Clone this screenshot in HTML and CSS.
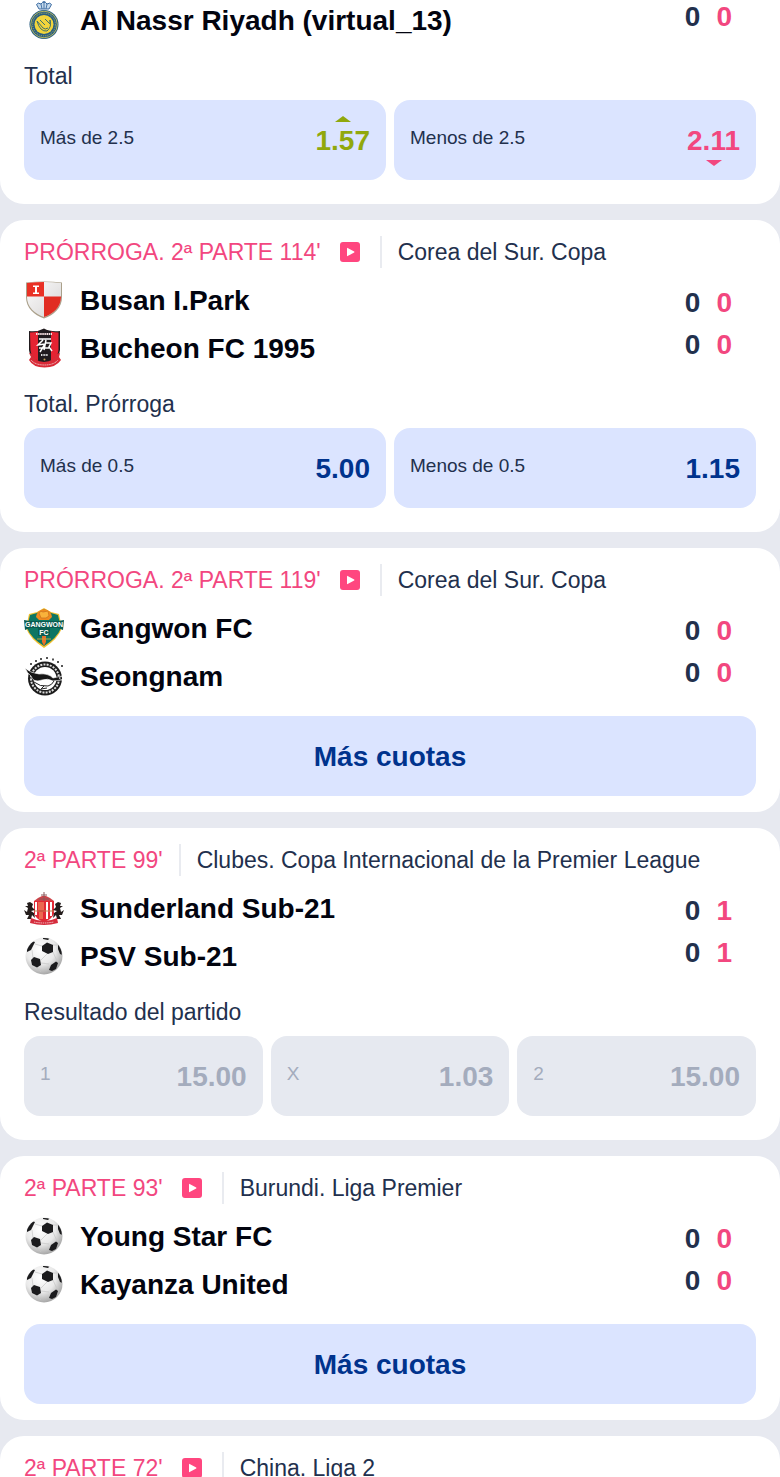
FILE: index.html
```html
<!DOCTYPE html>
<html lang="es">
<head>
    <meta charset="UTF-8">
    <meta name="viewport" content="width=device-width, initial-scale=1.0">
    <title>En directo</title>
    <link rel="stylesheet" href="styles.css">
</head>
<body>
    <!-- Shared icons -->
    <svg class="sprite" aria-hidden="true">
        <defs>
            <radialGradient id="ballShade" cx="40%" cy="32%" r="68%">
                <stop offset="0" stop-color="#ffffff"/>
                <stop offset="0.6" stop-color="#e9e9e9"/>
                <stop offset="1" stop-color="#a9a9a9"/>
            </radialGradient>
            <linearGradient id="silver" x1="0" y1="0" x2="1" y2="1">
                <stop offset="0" stop-color="#ffffff"/>
                <stop offset="1" stop-color="#d2d0d0"/>
            </linearGradient>
            <clipPath id="ballClip"><circle cx="20" cy="20" r="18"/></clipPath>
            <clipPath id="busanClip"><path d="M3 3 Q20 1 37 3 V17 C37 27 29 34 20 37 C11 34 3 27 3 17Z"/></clipPath>
        </defs>
        <symbol id="play" viewBox="0 0 20 20">
            <rect width="20" height="20" rx="3" fill="#ff467f"/>
            <path d="M7 6.2v7.600q0 .6.6.3l6.600-3.700q.5-.4 0-.8L7.600 5.900Q7 5.600 7 6.200Z" fill="#fff"/>
        </symbol>
        <symbol id="ball" viewBox="0 0 40 40">
            <circle cx="20" cy="20" r="18.5" fill="url(#ballShade)"/>
            <g clip-path="url(#ballClip)">
                <path d="M18 10L11 8M23 18L17 24M28 9L34 9M8 14L9 22M17 27L25 28M13 32L17 36M29 16L33 25M25 35L28 33" fill="none" stroke="#c6c6c6" stroke-width=".7"/>
                <path d="M19 1L26 2L24 4L19 3Z" fill="#1b1b1d"/>
                <path d="M3 11L8 5L11 6L9 10L7 14L3 16Z" fill="#1b1b1d"/>
                <path d="M18 10L23 6.500L29 9L29 16L24 18L18 15Z" fill="#1b1b1d"/>
                <path d="M34 8L37 11L39 19L36 18L34 13Z" fill="#1b1b1d"/>
                <path d="M7 24L10 21L16 23L17 29L13 31.500L8 29Z" fill="#1b1b1d"/>
                <path d="M27 29L32 25.500L34 27L32 33L28 35L25 34Z" fill="#1b1b1d"/>
            </g>
        </symbol>
        <symbol id="nassr" viewBox="0 0 40 40">
            <path d="M15 9L12.5 4.500Q14 2 17 4Q20 0 23 4Q26 2 27.5 4.500L25 9Z" fill="#c4d9ec" stroke="#3c6ba1"/>
            <path d="M20 1V9M17 4L18 9M23 4L22 9M18.5 2H21.5" stroke="#3c6ba1" stroke-width=".9"/>
            <circle cx="20" cy="24.5" r="14.5" fill="#285d82"/>
            <circle cx="20" cy="24.5" r="13.3" fill="none" stroke="#d7cc55" stroke-width=".8"/>
            <circle cx="20" cy="24.5" r="11.4" fill="none" stroke="#a5ae65" stroke-width="1" stroke-dasharray="1.2 1"/>
            <circle cx="20" cy="24.5" r="9.5" fill="#f1d53c"/>
            <path d="M13 21L19 28Q21 30 24 28M16 20L21 25M21 19L26 24V20Q28 27 23 31Q16 32 13 21" fill="none" stroke="#41706a"/>
        </symbol>
        <symbol id="busan" viewBox="0 0 40 40">
            <path d="M2 2.500Q20 .5 38 2.500V17C38 28 30 35 20 38.500C10 35 2 28 2 17Z" fill="#aaa08a"/>
            <g clip-path="url(#busanClip)">
                <rect width="40" height="40" fill="url(#silver)"/>
                <rect width="20" height="16.500" fill="#e93125"/>
                <rect x="20" y="16.500" width="20" height="24" fill="#e12d22"/>
            </g>
            <path d="M9 5.500H15V7H13V12.500H15V14H9V12.500H11V7H9Z" fill="#fff"/>
        </symbol>
        <symbol id="bucheon" viewBox="0 0 40 40">
            <path d="M5 3Q14 4 20 .5Q26 4 36 3V22C35 30 28 34 20 37C12 34 6 30 5 22Z" fill="#211b1e"/>
            <path d="M6 4.500Q11 4.500 14 3.500V33Q7 29 6.500 22ZM27 3.500Q31 4.500 34.500 4.500V22Q34 29 27 33Z" fill="#e52332"/>
            <path d="M12 6H28" stroke="#f4dfe0" stroke-width="2" stroke-dasharray="1.5 .6"/>
            <path d="M15 11H27M19 12L14 17L21 16L16 24M22 12L20 22M22 15H27L25 19L28 23M15 20L25 20" fill="none" stroke="#fff" stroke-width="1.5"/>
            <path d="M17 27H24" stroke="#ddd" stroke-width="2" stroke-dasharray="1 .6"/>
            <circle cx="20.5" cy="31.5" r="1" fill="#c5a35a"/>
            <path d="M5 25L9 26Q10 33 20 34Q30 33 32 26L36 25L35 29L37 32Q32 39.500 20.5 39.500Q9 39.500 5 32L7 29Z" fill="#d92a37"/>
            <path d="M7 32Q11 37 20.5 37Q30 37 34 32" fill="none" stroke="#f1c7c9" stroke-dasharray="1.2 .5"/>
        </symbol>
        <symbol id="seongnam" viewBox="0 0 40 40">
            <circle cx="21" cy="22.5" r="17" fill="#1c1c1c"/>
            <circle cx="21" cy="22.5" r="14" fill="none" stroke="#ddd" stroke-width="2" stroke-dasharray="2 1.2"/>
            <circle cx="21" cy="22.5" r="11.5" fill="#fff"/>
            <path d="M1 12Q6 17 15 18Q24 17 29 22L38 20L35 22L38 24L29 25Q24 22 18 24Q9 27 7 20Q3 17 1 12Z" fill="#171717" stroke="#fff" stroke-width=".6"/>
            <path d="M10 26Q16 31 24 30Q28 29 30 25M20 30L17 33L23 32" fill="none" stroke="#222"/>
            <path d="M6 8h2M11 5h2M16 3h2M22 2h2M28 3.500h2M33 6h2M37 10h2" stroke="#555" stroke-width="2"/>
        </symbol>
        <symbol id="sunderland" viewBox="0 0 40 40">
            <path d="M10 13L14 10L18 8H22L26 10L30 13Z" fill="#cf4349"/>
            <path d="M20 4V13M15 11H25M17 7H23" stroke="#89595a"/>
            <path d="M10 13H30V26Q28 31 20 34Q12 31 10 26Z" fill="#e22935"/>
            <path d="M12 14V27M23 14V31M27 14V28" stroke="#fff" stroke-width="2"/>
            <path d="M14 14H20V22H14ZM15 24H19V31H15Z" fill="#ec6850"/>
            <path d="M10 23H30" stroke="#bc8250"/>
            <path id="lion" d="M9 16L6 14L3 15L4 18L1 18L4 20L3 24L0 22L2 27L5 27L3 31L7 31L8 27L11 30L10 25L7 23L11 22L8 19Z" fill="#231c1b"/>
            <use href="#lion" transform="translate(40 0) scale(-1 1)"/>
            <path d="M7 30Q13 33 20 33Q27 33 33 30L34 35Q20 39 6 35Z" fill="#d52d3d"/>
            <path d="M10 34Q20 36 30 34" fill="none" stroke="#f5c6c9" stroke-width="1" stroke-dasharray="1.4 .8"/>
        </symbol>
    </svg>

    <main class="matches">
        <article class="match match-scrolled">
            <div class="match-body">
                <div class="teams">
                    <div class="team"><svg class="crest"><use href="#nassr"/></svg><span class="team-name">Al Nassr Riyadh (virtual_13)</span></div>
                </div>
                <div class="scores">
                    <div class="score"><span>0</span><span class="live">0</span></div>
                </div>
            </div>
            <div class="market">Total</div>
            <div class="odds">
                <button class="odd"><span class="odd-name">Más de 2.5</span><span class="odd-value up">1.57</span></button>
                <button class="odd"><span class="odd-name">Menos de 2.5</span><span class="odd-value down">2.11</span></button>
            </div>
        </article>

        <article class="match">
            <div class="match-head">
                <span class="time">PRÓRROGA. 2ª PARTE 114'</span>
                <button class="play" aria-label="Ver"><svg><use href="#play"/></svg></button>
                <span class="league">Corea del Sur. Copa</span>
            </div>
            <div class="match-body">
                <div class="teams">
                    <div class="team"><svg class="crest"><use href="#busan"/></svg><span class="team-name">Busan I.Park</span></div>
                    <div class="team"><svg class="crest"><use href="#bucheon"/></svg><span class="team-name">Bucheon FC 1995</span></div>
                </div>
                <div class="scores">
                    <div class="score"><span>0</span><span class="live">0</span></div>
                    <div class="score"><span>0</span><span class="live">0</span></div>
                </div>
            </div>
            <div class="market">Total. Prórroga</div>
            <div class="odds">
                <button class="odd"><span class="odd-name">Más de 0.5</span><span class="odd-value">5.00</span></button>
                <button class="odd"><span class="odd-name">Menos de 0.5</span><span class="odd-value">1.15</span></button>
            </div>
        </article>

        <article class="match">
            <div class="match-head">
                <span class="time">PRÓRROGA. 2ª PARTE 119'</span>
                <button class="play" aria-label="Ver"><svg><use href="#play"/></svg></button>
                <span class="league">Corea del Sur. Copa</span>
            </div>
            <div class="match-body">
                <div class="teams">
                    <div class="team">
                        <svg class="crest" viewBox="0 0 40 40">
                            <path d="M5 6L13 4L20 0L27 4L35 6L38 20Q34 31 20 40Q6 31 2 20Z" fill="#f2c12e"/>
                            <path d="M6 7L13 5L20 1L27 5L34 7L37 20Q33 30 20 38Q7 30 3 20Z" fill="#0d7663"/>
                            <path d="M12 9Q13 2 20 1Q27 2 28 9L25 12H15Z" fill="#f08a1f"/>
                            <path d="M15 5Q17 2 19 4L24 3L25 8L22 10H17Z" fill="#f9b23b" stroke="#c96d1c" stroke-width=".7"/>
                            <path d="M18 24H22V34L20 38L18 34Z" fill="#e8702a"/>
                            <path d="M0 12L6 13H34L40 12L39 22L34 20H26V28H14V20H6L1 22Z" fill="#0a5c50"/>
                            <text x="20" y="19" class="crest-text">GANGWON</text>
                            <text x="20" y="27" class="crest-text">FC</text>
                            <path d="M13 31H27" stroke="#c2a23a"/>
                        </svg>
                        <span class="team-name">Gangwon FC</span>
                    </div>
                    <div class="team"><svg class="crest"><use href="#seongnam"/></svg><span class="team-name">Seongnam</span></div>
                </div>
                <div class="scores">
                    <div class="score"><span>0</span><span class="live">0</span></div>
                    <div class="score"><span>0</span><span class="live">0</span></div>
                </div>
            </div>
            <button class="more">Más cuotas</button>
        </article>

        <article class="match">
            <div class="match-head">
                <span class="time">2ª PARTE 99'</span>
                <span class="league">Clubes. Copa Internacional de la Premier League</span>
            </div>
            <div class="match-body">
                <div class="teams">
                    <div class="team"><svg class="crest"><use href="#sunderland"/></svg><span class="team-name">Sunderland Sub-21</span></div>
                    <div class="team"><svg class="crest"><use href="#ball"/></svg><span class="team-name">PSV Sub-21</span></div>
                </div>
                <div class="scores">
                    <div class="score"><span>0</span><span class="live">1</span></div>
                    <div class="score"><span>0</span><span class="live">1</span></div>
                </div>
            </div>
            <div class="market">Resultado del partido</div>
            <div class="odds">
                <button class="odd" disabled><span class="odd-name">1</span><span class="odd-value">15.00</span></button>
                <button class="odd" disabled><span class="odd-name">X</span><span class="odd-value">1.03</span></button>
                <button class="odd" disabled><span class="odd-name">2</span><span class="odd-value">15.00</span></button>
            </div>
        </article>

        <article class="match">
            <div class="match-head">
                <span class="time">2ª PARTE 93'</span>
                <button class="play" aria-label="Ver"><svg><use href="#play"/></svg></button>
                <span class="league">Burundi. Liga Premier</span>
            </div>
            <div class="match-body">
                <div class="teams">
                    <div class="team"><svg class="crest"><use href="#ball"/></svg><span class="team-name">Young Star FC</span></div>
                    <div class="team"><svg class="crest"><use href="#ball"/></svg><span class="team-name">Kayanza United</span></div>
                </div>
                <div class="scores">
                    <div class="score"><span>0</span><span class="live">0</span></div>
                    <div class="score"><span>0</span><span class="live">0</span></div>
                </div>
            </div>
            <button class="more">Más cuotas</button>
        </article>

        <article class="match">
            <div class="match-head">
                <span class="time">2ª PARTE 72'</span>
                <button class="play" aria-label="Ver"><svg><use href="#play"/></svg></button>
                <span class="league">China. Liga 2</span>
            </div>
        </article>
    </main>
</body>
</html>
```
FILE: styles.css
```css
* {
    box-sizing: border-box;
}

body {
    margin: 0;
    font-family: "Liberation Sans", Arial, sans-serif;
    font-size: 23px;
    color: #22304d;
    background-color: #e7e9f0;
}

button {
    font-family: inherit;
    border: none;
    cursor: pointer;
}

.sprite {
    position: absolute;
    width: 0;
    height: 0;
}

.crest-text {
    font-size: 7px;
    font-weight: bold;
    text-anchor: middle;
    fill: #fff;
}

.matches {
    display: flex;
    flex-direction: column;
    gap: 16px;
    height: 100vh;
    overflow: hidden;
}

.match {
    flex-shrink: 0;
    padding: 16px 24px;
    border-radius: 24px;
    background-color: #fff;
}

/* card cut by the top of the list */
.match-scrolled {
    padding-top: 0;
    border-top-left-radius: 0;
    border-top-right-radius: 0;
}

.match-head {
    display: flex;
    align-items: center;
    height: 32px;
    margin-bottom: 12px;
    white-space: nowrap;
}

.time {
    padding-right: 16px;
    color: #f2477f;
}

.play {
    width: 20px;
    height: 20px;
    margin: 0 20px 0 3px;
    padding: 0;
    background: none;
}

.play svg {
    display: block;
    width: 20px;
    height: 20px;
}

.league {
    padding-left: 16px;
    border-left: 2px solid #e9ebf0;
    line-height: 32px;
}

.match-body {
    display: flex;
    justify-content: space-between;
}

.teams {
    display: flex;
    flex-direction: column;
    gap: 8px;
}

.team {
    display: flex;
    align-items: center;
    gap: 16px;
    height: 40px;
    font-size: 28px;
    font-weight: bold;
    color: #02040f;
}

.team-name {
    padding-top: 2px;
}

.crest {
    width: 40px;
    height: 40px;
}

.scores {
    display: flex;
    flex-direction: column;
    justify-content: flex-end;
    gap: 8px;
    padding: 0 24px 6px 0;
}

.score {
    display: flex;
    gap: 16px;
    font-size: 28px;
    font-weight: bold;
    line-height: 34px;
}

.live {
    color: #f2477f;
}

.market {
    margin: 24px 0 12px;
    line-height: 24px;
}

.odds {
    display: grid;
    grid-auto-flow: column;
    grid-auto-columns: 1fr;
    gap: 8px;
    margin-bottom: 8px;
}

.odd {
    display: flex;
    align-items: center;
    justify-content: space-between;
    height: 80px;
    padding: 0 16px;
    border-radius: 16px;
    color: #22304d;
    background-color: #dbe4ff;
}

.odd-name {
    padding-bottom: 4px;
    font-size: 19px;
}

.odd-value {
    position: relative;
    padding-top: 2px;
    font-size: 28px;
    font-weight: bold;
    line-height: 32px;
    color: #00338d;
}

.odd-value.up {
    color: #91a80c;
}

.odd-value.down {
    color: #f2477f;
}

/* price movement arrows */
.up::before,
.down::after {
    content: "";
    position: absolute;
    left: 50%;
    margin-left: -8px;
    border: 8px solid transparent;
    border-top-width: 0;
    border-bottom-width: 0;
}

.up::before {
    top: -7px;
    border-bottom: 6px solid #91a80c;
}

.down::after {
    bottom: -9px;
    border-top: 6px solid #f2477f;
}

.odd:disabled {
    background-color: #e6e9f0;
    cursor: default;
}

.odd:disabled .odd-name,
.odd:disabled .odd-value {
    color: #a4acbd;
}

.more {
    display: block;
    width: 100%;
    height: 80px;
    margin-top: 20px;
    padding: 2px 0 0;
    border-radius: 16px;
    font-size: 28px;
    font-weight: bold;
    color: #00338d;
    background-color: #dbe4ff;
}
```
